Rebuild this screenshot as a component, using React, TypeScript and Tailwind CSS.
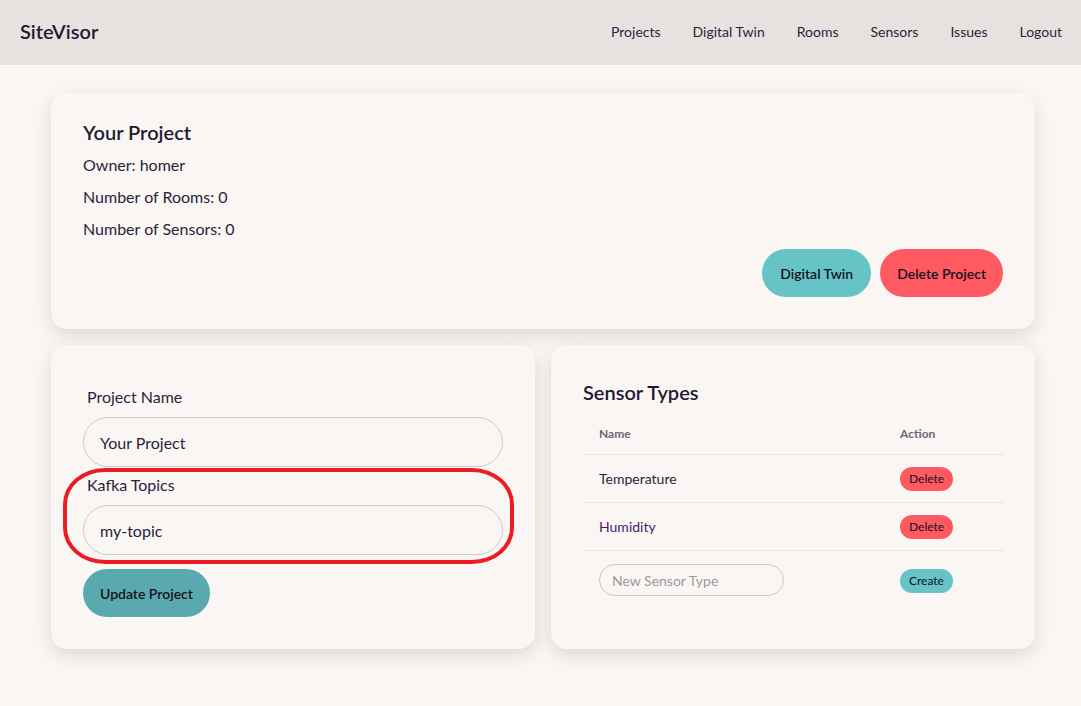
import React from "react";

const navLinks = ["Projects", "Digital Twin", "Rooms", "Sensors", "Issues"];

function Navbar() {
  return (
    <nav className="h-[65px] bg-[#e7e2df] flex items-center justify-between pl-5 pr-[19px] pb-[3px]">
      <div className="text-[20px] font-semibold text-[#1e1a33]">SiteVisor</div>
      <ul className="flex items-center gap-[32px] text-[14px] text-[#2a1f3d]">
        {navLinks.map((l) => (
          <li key={l}>{l}</li>
        ))}
        <li>Logout</li>
      </ul>
    </nav>
  );
}

function ProjectCard() {
  return (
    <div className="bg-[#faf6f3] rounded-2xl shadow-[0_6px_18px_rgba(0,0,0,0.12)] p-8 pt-[25px]">
      <h2 className="text-[20px] font-semibold text-[#1e1a33] leading-7">Your Project</h2>
      <div className="mt-[8px] flex flex-col gap-[10px] text-[16px] leading-[22px] text-[#2a1f3d]">
        <p>Owner: homer</p>
        <p>Number of Rooms: 0</p>
        <p>Number of Sensors: 0</p>
      </div>
      <div className="flex justify-end gap-[9px] mt-[9px]">
        <button className="h-12 px-[18px] rounded-full bg-[#66c3c6] text-[14px] font-semibold text-[#14121f]">
          Digital Twin
        </button>
        <button className="h-12 px-[17px] rounded-full bg-[#ff5a62] text-[14px] font-semibold text-[#14121f]">
          Delete Project
        </button>
      </div>
    </div>
  );
}

function UpdateCard() {
  return (
    <div className="relative bg-[#faf6f3] rounded-2xl shadow-[0_6px_18px_rgba(0,0,0,0.12)] px-8 pt-[42px] pb-8">
      <label className="block pl-1 text-[16px] leading-5 text-[#2a1f3d]">Project Name</label>
      <input
        className="mt-[10px] w-full h-[50px] rounded-full border border-[#cfcaca] bg-transparent px-4 text-[16px] text-[#2a1f3d] outline-none"
        defaultValue="Your Project"
      />
      <label className="block mt-[8px] pl-1 text-[16px] leading-5 text-[#2a1f3d]">Kafka Topics</label>
      <input
        className="mt-[10px] w-full h-[50px] rounded-full border border-[#cfcaca] bg-transparent px-4 text-[16px] text-[#2a1f3d] outline-none"
        defaultValue="my-topic"
      />
      <button className="mt-[14px] h-12 px-[17px] rounded-full bg-[#5aa9ae] text-[14px] font-semibold text-[#14121f]">
        Update Project
      </button>
      <div className="absolute left-[12px] top-[123px] w-[451px] h-[96px] border-[4px] border-[#ed1c24] rounded-[42px/36px] pointer-events-none" />
    </div>
  );
}

function SensorTypesCard() {
  const rows = ["Temperature", "Humidity"];
  return (
    <div className="bg-[#faf6f3] rounded-2xl shadow-[0_6px_18px_rgba(0,0,0,0.12)] px-8 pt-[33px] pb-8">
      <h2 className="text-[20px] font-semibold text-[#1e1a33] leading-7">Sensor Types</h2>
      <table className="mt-[8px] w-full text-left">
        <thead>
          <tr className="border-b border-[#e8e3e0]">
            <th className="h-[40px] pl-4 text-[12px] font-bold text-[#6e6579]">Name</th>
            <th className="h-[40px] w-[103px] text-[12px] font-bold text-[#6e6579]">Action</th>
          </tr>
        </thead>
        <tbody>
          {rows.map((r, i) => (
            <tr key={r} className="border-b border-[#e8e3e0]">
              <td className={`h-[48px] pl-4 text-[14px] ${i === 1 ? "text-[#4a1770]" : "text-[#2a1f3d]"}`}>{r}</td>
              <td className="h-[48px]">
                <button className="h-6 px-[9px] rounded-full bg-[#ff5a62] text-[12px] text-[#14121f]">Delete</button>
              </td>
            </tr>
          ))}
          <tr>
            <td className="h-[58px] pl-4 pt-[2px]">
              <input
                className="w-[185px] h-8 rounded-full border border-[#cfcaca] bg-transparent px-3 text-[14px] outline-none placeholder:text-[#9e98a0]"
                placeholder="New Sensor Type"
              />
            </td>
            <td className="h-[58px] pt-[2px]">
              <button className="h-6 px-[9px] rounded-full bg-[#66c3c6] text-[12px] text-[#14121f]">Create</button>
            </td>
          </tr>
        </tbody>
      </table>
    </div>
  );
}

export default function App() {
  return (
    <div
      className="min-h-screen bg-[#faf6f3]"
      style={{ fontFamily: '"Segoe UI", Lato, "Noto Sans", sans-serif' }}
    >
      <Navbar />
      <main className="pl-[51px] pr-[46px] pt-7 pb-14 flex flex-col gap-4">
        <ProjectCard />
        <div className="grid grid-cols-2 gap-4">
          <UpdateCard />
          <SensorTypesCard />
        </div>
      </main>
    </div>
  );
}
